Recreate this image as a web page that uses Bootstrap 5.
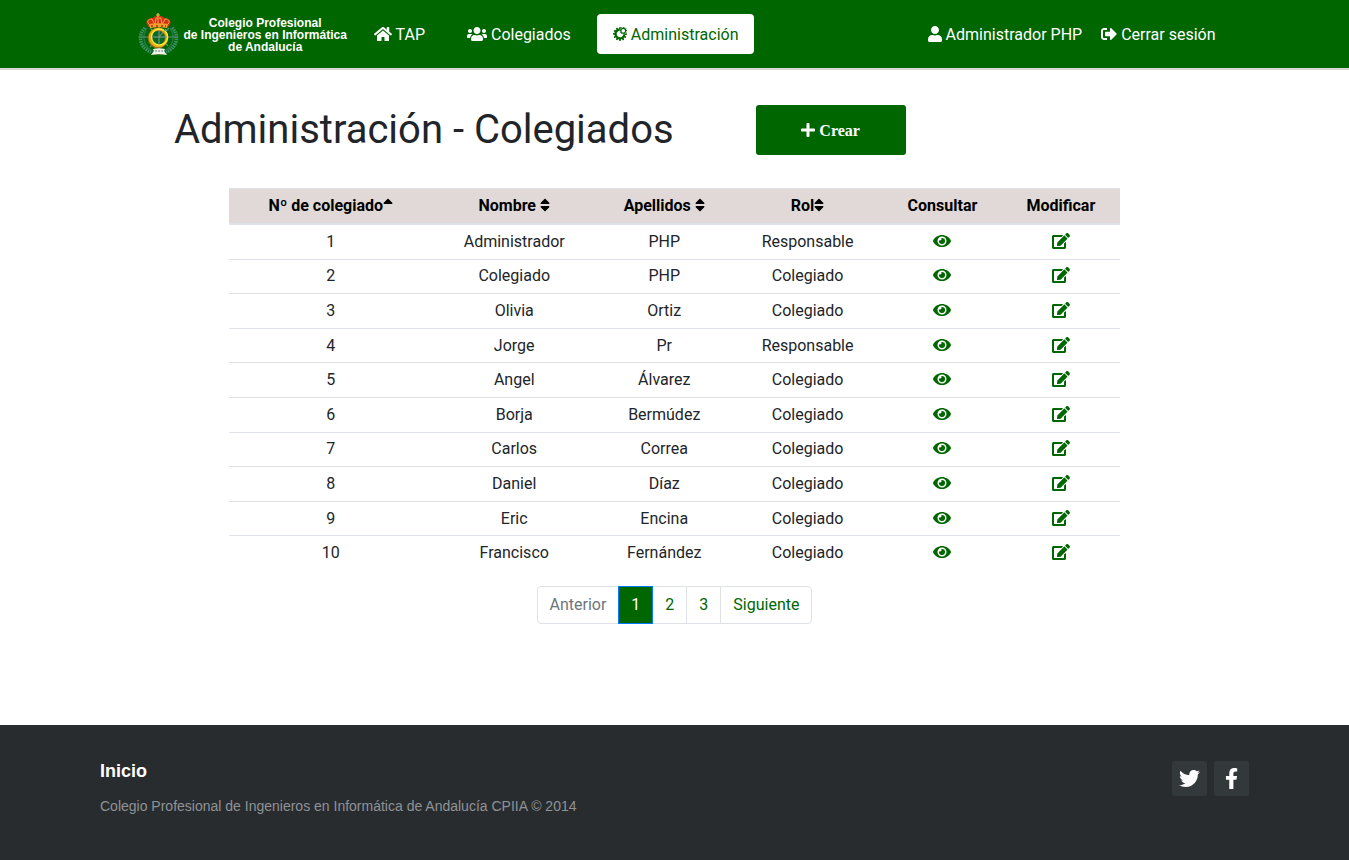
<!DOCTYPE html>
<html lang="es">
<head>
<meta charset="utf-8">
<meta name="viewport" content="width=device-width, initial-scale=1">
<title>Administración - Colegiados</title>
<link href="https://cdn.jsdelivr.net/npm/bootstrap@5.3.0/dist/css/bootstrap.min.css" rel="stylesheet">
<style>
  :root { --verde: #006600; }
  body { font-family: Roboto, sans-serif; color: #212529; }
  .icono { height: 1em; vertical-align: -2px; fill: currentColor; }
  .barra { background: var(--verde); border-bottom: 2px solid #d5d8d5; padding: 11px 0; }
  .barra .container { padding: 0 29px 0 33px; }
  .marca { color: #fff; font: bold 12px/12px "Liberation Sans", Arial, sans-serif; text-align: center; text-decoration: none; gap: 4px; margin-right: 11px; padding-top: 2px; }
  .marca svg { width: 42px; height: 44px; }
  .barra .menu { gap: 10px; }
  .barra .menu .nav-link { color: #fff; padding: 9px 16px 7px; border-radius: 4px; }
  .barra .menu .nav-link.active { background: #fff; color: var(--verde); }
  .barra .sesion { gap: 19px; }
  .barra .sesion .nav-link { color: #fff; padding: 9px 0 7px; }
  .titular { margin-left: 12%; width: 80%; padding: 35px 12px 33px; gap: 24px 82px; }
  .titular h1 { font-size: 40px; line-height: 48px; font-weight: 400; }
  .crear { background: var(--verde); color: #fff; width: 150px; height: 50px; padding: 8px 12px 6px; border-radius: 3px; font: bold 16px/24px "Liberation Serif", "Times New Roman", serif; }
  .crear:hover { background: #005200; color: #fff; }
  .listado { width: 66%; height: 382px; table-layout: fixed; text-align: center; vertical-align: middle; color: #212529; }
  .listado > :not(caption) > * > * { padding: 4px 0; border-bottom: 0; border-top: 1px solid #dee2e6; }
  .listado > thead > tr > th { background: #e0d9d7; color: #000; border-bottom: 2px solid #dee2e6; font-weight: 700; height: 35px; padding: 5px 0; vertical-align: top; }
  .listado > tbody > tr:first-child > td { border-top: 0; }
  .listado a { color: var(--verde); }
  .listado th a { color: inherit; text-decoration: none; }
  .c1 { width: 22.8%; } .c2 { width: 18.4%; } .c3 { width: 15.3%; } .c4 { width: 16.9%; } .c5 { width: 13.4%; }
  .paginas { --bs-pagination-color: #006600; --bs-pagination-hover-color: #006600; --bs-pagination-active-bg: #006600; --bs-pagination-active-border-color: #007bff; --bs-pagination-disabled-bg: #fff; --bs-pagination-disabled-color: #6c757d; --bs-pagination-border-radius: 4px; --bs-pagination-border-color: #dee2e6; }
  .pie { background: #292c2f; padding: 36px 100px 44px; font-family: "Liberation Sans", Arial, sans-serif; }
  .pie .inicio { color: #fff; font-size: 18px; line-height: 20px; font-weight: 700; text-decoration: none; }
  .pie p { color: #8f9296; font-size: 14px; line-height: 20px; margin: 15px 0 0; }
  .redes { gap: 7px; }
  .redes a { width: 35px; height: 35px; padding-bottom: 1px; background: #33383b; border-radius: 2px; color: #fff; font-size: 21px; }
  @media (max-width: 991px) {
    .titular { margin-left: 0; width: 100%; }
    .listado { width: 100%; }
    .pie { padding: 36px 24px; }
  }
</style>
</head>
<body class="d-flex flex-column min-vh-100">

<svg class="d-none" aria-hidden="true">
  <symbol id="i-ojo" viewBox="0 0 576 512"><path d="M572.52 241.4C518.29 135.59 410.93 64 288 64S57.68 135.64 3.48 241.41a32.35 32.35 0 0 0 0 29.19C57.71 376.41 165.07 448 288 448s230.32-71.64 284.52-177.41a32.35 32.35 0 0 0 0-29.19zM288 400a144 144 0 1 1 144-144 143.93 143.93 0 0 1-144 144zm0-240a95.31 95.31 0 0 0-25.31 3.79 47.85 47.85 0 0 1-66.9 66.9A95.78 95.78 0 1 0 288 160z"/></symbol>
  <symbol id="i-editar" viewBox="0 0 576 512"><path d="M402.6 83.2l90.2 90.2c3.8 3.8 3.8 10 0 13.8L274.4 405.6l-92.8 10.3c-12.4 1.4-22.9-9.1-21.5-21.5l10.3-92.8L388.8 83.2c3.8-3.8 10-3.8 13.8 0zm162-22.9l-48.8-48.8c-15.2-15.2-39.9-15.2-55.2 0l-35.4 35.4c-3.8 3.8-3.8 10 0 13.8l90.2 90.2c3.8 3.8 10 3.8 13.8 0l35.4-35.4c15.2-15.3 15.2-40 0-55.2zM384 346.2V448H64V128h229.8c3.2 0 6.2-1.3 8.5-3.5l40-40c7.6-7.6 2.2-20.5-8.5-20.5H48C21.5 64 0 85.5 0 112v352c0 26.5 21.5 48 48 48h352c26.5 0 48-21.5 48-48V306.2c0-10.7-12.9-16-20.5-8.5l-40 40c-2.2 2.3-3.5 5.3-3.5 8.5z"/></symbol>
  <symbol id="i-orden" viewBox="0 0 320 512"><path d="M41 288h238c21.4 0 32.1 25.9 17 41L177 448c-9.4 9.4-24.6 9.4-33.9 0L24 329c-15.1-15.1-4.4-41 17-41zm255-105L177 64c-9.4-9.4-24.6-9.4-33.9 0L24 183c-15.1 15.1-4.4 41 17 41h238c21.4 0 32.1-25.9 17-41z"/></symbol>
</svg>

<header class="barra">
  <div class="container d-flex flex-wrap align-items-center">
    <a class="marca d-flex align-items-center" href="#">
      <!-- Escudo: corona, anillo dorado y ramas de laurel -->
      <svg viewBox="0 0 42 44" aria-hidden="true">
        <g fill="none" stroke="#3f9068" stroke-width="3.6" stroke-dasharray="1.6 .8">
          <path d="M7 15C-1 22 2 35 13 39"/><path d="M34 15C42 22 39 35 28 39"/>
        </g>
        <g fill="none" stroke="#1f7a48" stroke-width="1.4">
          <path d="M9 15C3 24 6 34 16 39M32 15C38 24 35 34 25 39"/>
        </g>
        <g stroke="#5c927e" stroke-width="1.1"><path d="M4 24h33M21 13v24M12 15l18 18M31 15L12 34"/></g>
        <circle cx="20" cy="25" r="8.600" fill="#0b6b26" stroke="#a06a14" stroke-width="3.400"/>
        <circle cx="20.500" cy="24.500" r="8.500" fill="none" stroke="#e6ac1c" stroke-width="2.600"/>
        <circle cx="21.500" cy="24" r="8" fill="none" stroke="#f8ea2e" stroke-width="1.400"/>
        <path d="M14 24h15M21 17v15M21 24l7-8" stroke="#7d9c93" stroke-width="1"/>
        <path d="M11 14C6 9 9 5 15 5c1-3 10-3 11 0 6 0 9 4 4 9z" fill="#d8301a"/>
        <path d="M12 12C8 9 10 6 14 6l3 6 1-7h5l1 7 3-6c4 0 6 3 2 6M20 5v7" fill="none" stroke="#efa737" stroke-width="1"/>
        <path d="M11 11c6-1 13-1 19 0l-1 4c-5-1-12-1-17 0z" fill="#eda12a"/>
        <path d="M13 13h2m3 0h2m3 0h2m2 0h1" stroke="#c4281c" stroke-width="1.500"/>
        <path d="M20 0v4m-2-2h4" stroke="#e9c440" stroke-width="1.200"/>
        <path d="M15 36c4-1 8-1 12 0l-1 2 3 4c-5-1-11-1-16 0l3-4z" fill="#eef2e9"/>
        <path d="M17 38h9" stroke="#788078" stroke-width="1.200" stroke-dasharray="2 1"/>
      </svg>
      <span>Colegio Profesional<br>de Ingenieros en Informática<br>de Andalucía</span>
    </a>
    <nav class="menu d-flex flex-wrap me-auto" aria-label="Principal">
      <a class="nav-link" href="#"><svg class="icono" viewBox="0 0 576 512"><path d="M280.37 148.26L96 300.11V464a16 16 0 0 0 16 16l112.06-.29a16 16 0 0 0 15.92-16V368a16 16 0 0 1 16-16h64a16 16 0 0 1 16 16v95.64a16 16 0 0 0 16 16.05L464 480a16 16 0 0 0 16-16V300L295.67 148.26a12.19 12.19 0 0 0-15.3 0zM571.6 251.47L488 182.56V44.05a12 12 0 0 0-12-12h-56a12 12 0 0 0-12 12v72.61L318.47 43a48 48 0 0 0-61 0L4.34 251.47a12 12 0 0 0-1.6 16.9l25.5 31A12 12 0 0 0 45.15 301l235.22-193.74a12.19 12.19 0 0 1 15.3 0L530.9 301a12 12 0 0 0 16.9-1.6l25.5-31a12 12 0 0 0-1.7-16.93z"/></svg> TAP</a>
      <a class="nav-link" href="#"><svg class="icono" viewBox="0 0 640 512"><path d="M96 224c35.3 0 64-28.7 64-64s-28.7-64-64-64-64 28.7-64 64 28.7 64 64 64zm448 0c35.3 0 64-28.7 64-64s-28.7-64-64-64-64 28.7-64 64 28.7 64 64 64zm32 32h-64c-17.6 0-33.5 7.1-45.1 18.6 40.3 22.1 68.9 62 75.1 109.4h66c17.7 0 32-14.3 32-32v-32c0-35.3-28.7-64-64-64zm-256 0c61.9 0 112-50.1 112-112S381.9 32 320 32 208 82.1 208 144s50.1 112 112 112zm76.8 32h-8.3c-20.8 10-43.9 16-68.5 16s-47.6-6-68.5-16h-8.3C179.6 288 128 339.6 128 403.2V432c0 26.5 21.5 48 48 48h288c26.5 0 48-21.5 48-48v-28.8c0-63.6-51.6-115.2-115.2-115.2zm-223.7-13.4C161.5 263.1 145.6 256 128 256H64c-35.3 0-64 28.7-64 64v32c0 17.7 14.3 32 32 32h65.9c6.3-47.4 34.9-87.3 75.2-109.4z"/></svg> Colegiados</a>
      <a class="nav-link active" href="#" aria-current="page"><svg class="icono" viewBox="0 0 448 512"><path d="M448 161v-21.3l-28.5-8.8-2.2-10.4 20.1-20.7L427 80.4l-29 7.5-7.2-7.5 7.5-28.2-19.1-11.6-21.3 21-10.7-3.2-7-26.4h-22.6l-6.2 26.4-12.1 3.2-19.7-21-19.4 11 8.1 27.7-8.1 8.4-28.5-7.5-11 19.1 20.7 21-2.9 10.4-28.5 7.8-.3 21.7 28.8 7.5 2.4 12.1-20.1 19.9 10.4 18.5 29.6-7.5 7.2 8.6-8.1 26.9 19.9 11.6 19.4-20.4 11.6 2.9 6.7 28.5 22.6.3 6.7-28.8 11.6-3.5 20.7 21.6 20.4-12.1-8.8-28 7.8-8.1 28.8 8.8 10.3-20.1-20.9-18.8 2.2-12.1 29.1-7zm-119.200 45.200c-31.300 0-56.800-25.400-56.800-56.800s25.400-56.800 56.800-56.800 56.800 25.400 56.800 56.800c0 31.500-25.400 56.800-56.800 56.800zm72.300 16.400l46.900 14.500V277l-55.100 13.400-4.100 22.700 38.900 35.300-19.200 37.900-54-16.700-14.600 15.200 16.700 52.500-38.300 22.700-38.900-40.500-21.700 6.600-12.600 54-42.400-.5-12.600-53.600-21.700-5.600-36.400 38.400-37.400-21.700 15.200-50.500-13.700-16.100-55.500 14.100-19.700-34.800 37.900-37.400-4.800-22.800-54-14.100.5-40.900L54 219.900l5.700-19.700-38.900-39.400L41.500 125l53.600 14.100 15.200-15.700-15.200-52 36.400-20.700 36.800 39.400L191 84l11.600-52H245l11.600 45.900L234 72l-6.300-1.700-3.300 5.700-11 19.100-3.300 5.600 4.600 4.600 17.200 17.400-.3 1-23.800 6.500-6.200 1.700-.1 6.400-.2 12.900C153.800 161.600 118 204 118 254.700c0 58.300 47.300 105.700 105.700 105.700 50.500 0 92.700-35.400 103.200-82.800l13.200.2 6.900.1 1.600-6.700 5.600-24 1.900-.6 17.100 17.800 4.700 4.900 5.800-3.400 20.400-12.100 5.800-3.500-2-6.500-6.800-21.200z"/></svg> Administración</a>
    </nav>
    <nav class="sesion d-flex flex-wrap" aria-label="Sesión">
      <a class="nav-link" href="#"><svg class="icono" viewBox="0 0 448 512"><path d="M224 256c70.7 0 128-57.3 128-128S294.7 0 224 0 96 57.3 96 128s57.3 128 128 128zm89.600 32h-16.700c-22.200 10.200-46.900 16-72.900 16s-50.600-5.800-72.900-16h-16.700C60.200 288 0 348.200 0 422.400V464c0 26.500 21.500 48 48 48h352c26.500 0 48-21.500 48-48v-41.600c0-74.200-60.200-134.400-134.400-134.400z"/></svg> Administrador PHP</a>
      <a class="nav-link" href="#"><svg class="icono" viewBox="0 0 512 512"><path d="M497 273L329 441c-15 15-41 4.500-41-17v-96H152c-13.300 0-24-10.700-24-24v-96c0-13.300 10.700-24 24-24h136V88c0-21.400 25.900-32 41-17l168 168c9.300 9.400 9.300 24.600 0 34zM192 436v-40c0-6.600-5.400-12-12-12H96c-17.700 0-32-14.300-32-32V160c0-17.700 14.300-32 32-32h84c6.600 0 12-5.400 12-12V76c0-6.600-5.400-12-12-12H96c-53 0-96 43-96 96v192c0 53 43 96 96 96h84c6.600 0 12-5.400 12-12z"/></svg> Cerrar sesión</a>
    </nav>
  </div>
</header>

<main class="flex-grow-1">
  <div class="titular d-flex flex-wrap align-items-center">
    <h1 class="m-0">Administración - Colegiados</h1>
    <button type="button" class="btn crear"><svg class="icono" viewBox="0 0 448 512"><path d="M416 208H272V64c0-17.670-14.330-32-32-32h-32c-17.670 0-32 14.330-32 32v144H32c-17.670 0-32 14.330-32 32v32c0 17.670 14.330 32 32 32h144v144c0 17.670 14.330 32 32 32h32c17.670 0 32-14.330 32-32V304h144c17.670 0 32-14.330 32-32v-32c0-17.670-14.330-32-32-32z"/></svg> Crear</button>
  </div>

  <table class="table listado mx-auto mb-3">
    <colgroup><col class="c1"><col class="c2"><col class="c3"><col class="c4"><col class="c5"><col></colgroup>
    <thead>
      <tr>
        <th scope="col"><a href="#">Nº de colegiado<svg class="icono" viewBox="0 0 320 512"><path d="M279 224H41c-21.400 0-32.100-25.900-17-41L143 64c9.400-9.400 24.600-9.400 33.900 0l119 119c15.200 15.100 4.500 41-16.900 41z"/></svg></a></th>
        <th scope="col"><a href="#">Nombre <svg class="icono" viewBox="0 0 320 512"><use href="#i-orden"/></svg></a></th>
        <th scope="col"><a href="#">Apellidos <svg class="icono" viewBox="0 0 320 512"><use href="#i-orden"/></svg></a></th>
        <th scope="col"><a href="#">Rol<svg class="icono" viewBox="0 0 320 512"><use href="#i-orden"/></svg></a></th>
        <th scope="col">Consultar</th>
        <th scope="col">Modificar</th>
      </tr>
    </thead>
    <tbody id="filas"></tbody>
  </table>

  <nav aria-label="Paginación">
    <ul class="pagination paginas justify-content-center m-0 pb-4">
      <li class="page-item disabled"><a class="page-link" href="#" aria-disabled="true">Anterior</a></li>
      <li class="page-item active" aria-current="page"><a class="page-link" href="#">1</a></li>
      <li class="page-item"><a class="page-link" href="#">2</a></li>
      <li class="page-item"><a class="page-link" href="#">3</a></li>
      <li class="page-item"><a class="page-link" href="#">Siguiente</a></li>
    </ul>
  </nav>
</main>

<footer class="pie d-flex justify-content-between align-items-start">
  <div>
    <a class="inicio d-block" href="#">Inicio</a>
    <p>Colegio Profesional de Ingenieros en Informática de Andalucía CPIIA © 2014</p>
  </div>
  <div class="redes d-flex">
    <a class="d-flex align-items-center justify-content-center" href="#" aria-label="Twitter"><svg class="icono" viewBox="0 0 512 512"><path d="M459.370 151.716c.325 4.548.325 9.097.325 13.645 0 138.720-105.583 298.558-298.558 298.558-59.452 0-114.680-17.219-161.137-47.106 8.447.974 16.568 1.299 25.340 1.299 49.055 0 94.213-16.568 130.274-44.832-46.132-.975-84.792-31.188-98.112-72.772 6.498.974 12.995 1.624 19.818 1.624 9.421 0 18.843-1.300 27.614-3.573-48.081-9.747-84.143-51.980-84.143-102.985v-1.299c13.969 7.797 30.214 12.670 47.431 13.319-28.264-18.843-46.781-51.005-46.781-87.391 0-19.492 5.197-37.360 14.294-52.954 51.655 63.675 129.300 105.258 216.365 109.807-1.624-7.797-2.599-15.918-2.599-24.040 0-57.828 46.782-104.934 104.934-104.934 30.213 0 57.502 12.670 76.670 33.137 23.715-4.548 46.456-13.320 66.599-25.340-7.798 24.366-24.366 44.833-46.132 57.827 21.117-2.273 41.584-8.122 60.426-16.243-14.292 20.791-32.161 39.308-52.628 54.253z"/></svg></a>
    <a class="d-flex align-items-center justify-content-center" href="#" aria-label="Facebook"><svg class="icono" viewBox="0 0 320 512"><path d="M279.140 288l14.220-92.660h-88.910v-60.130c0-25.350 12.420-50.060 52.240-50.060h40.420V6.260S260.430 0 225.360 0c-73.220 0-121.080 44.380-121.080 124.720v70.620H22.890V288h81.390v224h100.170V288z"/></svg></a>
  </div>
</footer>

<script src="https://cdn.jsdelivr.net/npm/bootstrap@5.3.0/dist/js/bootstrap.bundle.min.js"></script>
<script>
  const colegiados = [
    ["Administrador", "PHP", "Responsable"],
    ["Colegiado", "PHP", "Colegiado"],
    ["Olivia", "Ortiz", "Colegiado"],
    ["Jorge", "Pr", "Responsable"],
    ["Angel", "Álvarez", "Colegiado"],
    ["Borja", "Bermúdez", "Colegiado"],
    ["Carlos", "Correa", "Colegiado"],
    ["Daniel", "Díaz", "Colegiado"],
    ["Eric", "Encina", "Colegiado"],
    ["Francisco", "Fernández", "Colegiado"]
  ];
  const icono = id => `<svg class="icono" viewBox="0 0 576 512"><use href="#${id}"/></svg>`;
  document.getElementById("filas").innerHTML = colegiados.map(([nombre, apellidos, rol], i) =>
    `<tr><td>${i + 1}</td><td>${nombre}</td><td>${apellidos}</td><td>${rol}</td>
     <td><a href="#" aria-label="Consultar">${icono("i-ojo")}</a></td>
     <td><a href="#" aria-label="Modificar">${icono("i-editar")}</a></td></tr>`).join("");
</script>
</body>
</html>
